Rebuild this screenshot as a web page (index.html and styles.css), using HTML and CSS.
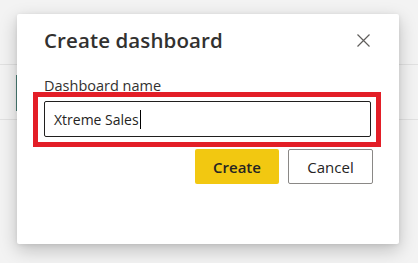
FILE: index.html
```html
<!DOCTYPE html>
<html lang="en">

<head>
    <meta charset="UTF-8">
    <meta name="viewport" content="width=device-width, initial-scale=1.0">
    <title>Create dashboard</title>
    <link rel="stylesheet" href="styles.css">
</head>

<body>

    <!-- the page behind the modal, only a few lines show -->
    <div class="page">
        <div class="row row-first"></div>
        <div class="row row-second"><span class="accent"></span></div>
    </div>

    <div class="dialog">
        <div class="dialog-head">
            <h1>Create dashboard</h1>
            <button class="close" aria-label="Close">
                <svg width="13" height="13" viewBox="0 0 13 13">
                    <path d="M0.5 0.5 L12.5 12.5 M12.5 0.5 L0.5 12.5" stroke="#605e5c" stroke-width="1.2" fill="none" />
                </svg>
            </button>
        </div>

        <label class="field-label">Dashboard name</label>
        <div class="highlight">
            <div class="textbox">Xtreme Sales<span class="caret"></span></div>
        </div>

        <div class="actions">
            <button class="btn btn-primary">Create</button>
            <button class="btn btn-default">Cancel</button>
        </div>
    </div>

</body>

</html>
```

FILE: styles.css
```css
body {
    margin: 0;
    width: 418px;
    height: 263px;
    overflow: hidden;
    background-color: #f3f3f3;
    font-family: "Open Sans", "Noto Sans", sans-serif;
    color: #252423;
    position: relative;
}

.page {
    padding-top: 64px;
}

.row {
    border-top: 1px solid #e1e1e1;
}

.row-first {
    height: 54px;
}

.row-second {
    height: 60px;
    position: relative;
}

.accent {
    position: absolute;
    left: 16px;
    top: -45px;
    width: 1px;
    height: 36px;
    background-color: #4a7d75;
}

.dialog {
    position: absolute;
    left: 17px;
    top: 14px;
    width: 382px;
    height: 230px;
    box-sizing: border-box;
    padding: 0 27px;
    background-color: #fff;
    border-radius: 2px;
    box-shadow: 0 6px 18px rgba(0, 0, 0, 0.22), 0 1px 4px rgba(0, 0, 0, 0.08);
}

.dialog-head {
    display: flex;
    justify-content: space-between;
    align-items: center;
    height: 52px;
}

h1 {
    margin: 0;
    font-size: 20.5px;
    font-weight: 600;
    line-height: 28px;
    color: #323130;
    letter-spacing: 0.1px;
}

.close {
    width: 13px;
    height: 13px;
    padding: 0;
    margin-right: 2px;
    border: none;
    background: none;
    display: flex;
}

.field-label {
    display: block;
    margin-top: 11px;
    font-size: 14.5px;
    line-height: 17px;
    color: #323130;
}

.highlight {
    margin: -2px -9px 0 -11px;
    border: 5px solid #e31e27;
    padding: 4px 5px 5px 6px;
}

.textbox {
    height: 34px;
    border: 1px solid #201f1e;
    border-radius: 2px;
    padding: 0 9px;
    display: flex;
    align-items: center;
    font-size: 14px;
    color: #252423;
}

.caret {
    display: inline-block;
    width: 1px;
    height: 19px;
    margin-left: 1px;
    background-color: #000;
}

.actions {
    display: flex;
    justify-content: flex-end;
    gap: 9px;
    margin-top: 2px;
    margin-right: -1px;
}

.btn {
    height: 35px;
    font-family: inherit;
    font-size: 15px;
    border-radius: 2px;
    padding: 0;
    cursor: pointer;
}

.btn-primary {
    width: 84px;
    background-color: #f2c811;
    border: none;
    font-weight: 600;
    color: #252423;
}

.btn-default {
    width: 85px;
    background-color: #fff;
    border: 1px solid #8a8886;
    color: #252423;
}
```
